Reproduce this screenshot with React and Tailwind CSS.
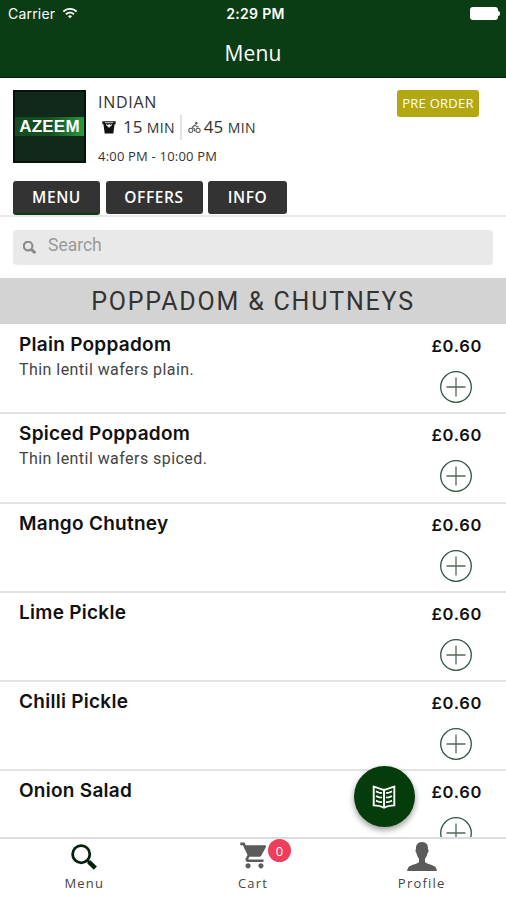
import { MdShoppingCart, MdWifi } from 'react-icons/md';

const tabs = [
  { label: 'MENU', className: 'w-[87px] h-[34px] border-b-2 border-[#0b3d14] pt-[2px]' },
  { label: 'OFFERS', className: 'w-[97px] h-[33px]' },
  { label: 'INFO', className: 'w-[79px] h-[33px]' },
];

const items = [
  { name: 'Plain Poppadom', description: 'Thin lentil wafers plain.', price: '£0.60' },
  { name: 'Spiced Poppadom', description: 'Thin lentil wafers spiced.', price: '£0.60' },
  { name: 'Mango Chutney', price: '£0.60' },
  { name: 'Lime Pickle', price: '£0.60' },
  { name: 'Chilli Pickle', price: '£0.60' },
  { name: 'Onion Salad', price: '£0.60' },
];

function SearchIcon({ className, strokeWidth = 2.8 }) {
  return (
    <svg viewBox="0 0 26 26" className={className} fill="none" stroke="currentColor" strokeWidth={strokeWidth}>
      <circle cx="10.2" cy="10.2" r="8.6" />
      <path d="M16 16l3 3" />
      <path d="M17.8 17.8l6.6 6.4" strokeWidth={strokeWidth + 1.6} />
    </svg>
  );
}

function BucketIcon() {
  return (
    <svg viewBox="0 0 14 14" className="h-[14px] w-[14px]">
      <path d="M.3 1.2H13.7V4.2H.3Z" fill="#222" />
      <path d="M1.3 3h11.4l-1.4 10.4H2.7Z" fill="#111" />
      <path d="M3 2.2h8v1H3Z" fill="#ccc" />
      <path d="M4 4.6l3 2.8 3-2.8-1.6.6L7 4.4l-1.4.8Z" fill="#fff" stroke="#fff" strokeWidth=".6" />
    </svg>
  );
}

function BikeIcon() {
  return (
    <svg viewBox="0 0 14 13" className="h-[13px] w-[13px]" fill="none" stroke="#555" strokeWidth="1.1">
      <circle cx="3" cy="9.5" r="2.3" />
      <circle cx="10.8" cy="9.5" r="2.3" />
      <path d="M7 10.5V8L4.6 6.3 7.5 3.8l1.8 2h2.2" />
      <circle cx="9" cy="1.9" r=".8" fill="#555" />
    </svg>
  );
}

function BookIcon() {
  return (
    <svg viewBox="0 0 24 24" className="h-6 w-6" fill="none" stroke="#fff" strokeWidth="1.9">
      <path d="M12 5Q8.5 4 1.7 1.7V20.4Q8 20.6 12 22.6Q16 20.6 22.3 20.4V1.7Q15.5 4 12 5ZM12 5V22.4" />
      <path
        d="M4 6.4l2 .9q2 .9 4 .4M4 11l2 .9q2 .9 4 .4M4 15.6l2 .9q2 .9 4 .4M20 6.4l-2 .9q-2 .9-4 .4M20 11l-2 .9q-2 .9-4 .4M20 15.6l-2 .9q-2 .9-4 .4"
        strokeWidth="1.7"
      />
    </svg>
  );
}

function ProfileIcon() {
  return (
    <svg viewBox="0 0 30 29" className="h-[29px] w-[30px]" fill="#5b5b5b">
      <path d="M15 0C10.7 0 8.7 3 9 7.2C8 7.6 8.5 10 9.5 11.2C10 14 11 15.5 12 16.5V20C10 22.2 3.5 23 1.6 25Q.4 26.5 .1 29H29.9Q29.6 26.5 28.4 25C26.5 23 20 22.2 18 20V16.5C19 15.5 20 14 20.5 11.2C21.5 10 22 7.6 21 7.2C21.3 3 19.3 0 15 0Z" />
    </svg>
  );
}

function AddButton() {
  return (
    <button className="block h-8 w-8">
      <svg viewBox="0 0 32 32" className="h-8 w-8" fill="none" stroke="#31523f" strokeWidth="1.3">
        <circle cx="16" cy="16" r="15.3" />
        <path d="M16 6.5v19M6.5 16h19" stroke="#53685b" />
      </svg>
    </button>
  );
}

function Header() {
  return (
    <header className="h-[78px] border-b border-[#05200a] bg-[#0b3d14] text-white">
      <div className="grid h-[26px] grid-cols-3 items-center pl-2 pr-[6px] font-['Inter',sans-serif] text-[14px]">
        <div className="flex items-center gap-[7px] tracking-[0.2px]">
          Carrier
          <MdWifi className="h-4 w-4" />
        </div>
        <div className="pl-[3px] text-center font-semibold tracking-[0.3px]">2:29 PM</div>
        <div className="flex items-center justify-end">
          <span className="h-[13px] w-[28px] rounded-[3px] bg-white" />
          <span className="h-[5px] w-[2px] rounded-r bg-white" />
        </div>
      </div>
      <h1 className="pt-[11px] text-center text-[21px] leading-8 tracking-[0.1px]">Menu</h1>
    </header>
  );
}

function RestaurantInfo() {
  return (
    <section className="flex h-[103px] items-start pl-[13px] pr-[27px] pt-3">
      <div className="flex h-[73px] w-[73px] items-center border-2 border-[#07120a] bg-[#10291a]">
        <div className="w-full bg-linear-to-r from-[#174d22] via-[#174d22] to-[#249b42] text-center font-['Liberation_Sans',sans-serif] text-[17px] font-bold leading-[19px] tracking-[0.2px] text-white">
          AZEEM
        </div>
      </div>
      <div className="ml-3 text-[#333]">
        <div className="text-[16px] leading-6 tracking-[0.7px]">INDIAN</div>
        <div className="flex h-[26px] items-center text-[17px]">
          <span className="ml-1 mr-[7px]"><BucketIcon /></span>
          <span>15 <span className="text-[14px] tracking-[0.3px]">MIN</span></span>
          <span className="mx-[5.5px] h-[25px] w-[2px] bg-[#e4e4e4]" />
          <BikeIcon />
          <span className="ml-[3px]">45 <span className="text-[14px] tracking-[0.4px]">MIN</span></span>
        </div>
        <div className="pt-[5px] text-[13px] leading-[22px] tracking-[0.2px]">4:00 PM - 10:00 PM</div>
      </div>
      <span className="ml-auto grid h-[27px] w-[82px] place-items-center rounded-[3px] bg-[#b4a812] text-[13px] tracking-[0.25px] text-white">
        PRE ORDER
      </span>
    </section>
  );
}

function MenuItem({ item }) {
  return (
    <li className="flex h-[89.25px] shrink-0 justify-between border-b-2 border-[#e3e3e3] pl-[19px] pr-6">
      <div>
        <h3 className="pt-2 font-['Inter',sans-serif] text-[19px] font-semibold leading-6 tracking-[0.27px] text-[#111]">{item.name}</h3>
        <p className="pt-[2px] font-['Roboto',sans-serif] text-[16px] leading-[22px] tracking-[0.45px] text-[#444]">{item.description}</p>
      </div>
      <div className="flex flex-col items-center">
        <span className="pt-[9px] font-['Inter',sans-serif] text-[16.5px] font-semibold leading-6 tracking-[0.7px] text-[#111]">{item.price}</span>
        <div className="mt-[13px] pr-[2px]"><AddButton /></div>
      </div>
    </li>
  );
}

export default function App() {
  return (
    <div className="relative flex h-[900px] w-[506px] flex-col overflow-hidden bg-white font-['Open_Sans',sans-serif]">
      <Header />
      <RestaurantInfo />

      <nav className="flex h-[36px] shrink-0 gap-[5.5px] border-b-2 border-[#e9e9e9] pl-[13px]">
        {tabs.map((tab) => (
          <button
            key={tab.label}
            className={`rounded-[3px] bg-[#333] text-[15.5px] font-semibold tracking-[0.6px] text-white ${tab.className}`}
          >
            {tab.label}
          </button>
        ))}
      </nav>

      <div className="h-[61px] shrink-0 px-[13px] pt-[13px]">
        <div className="flex h-[35px] items-center rounded bg-[#e9e9e9] pl-[10px] text-[#8b8b8b]">
          <SearchIcon className="h-[13px] w-[13px]" strokeWidth={4.2} />
          <span className="ml-3 pb-[5px] font-['Roboto',sans-serif] text-[17.5px] text-[#999]">Search</span>
        </div>
      </div>

      <h2 className="h-[46px] shrink-0 bg-[#d3d3d3] text-center font-['Roboto',sans-serif] text-[25px] leading-[47px] tracking-[1.8px] text-[#333]">
        POPPADOM &amp; CHUTNEYS
      </h2>

      <ul className="flex h-[513px] shrink-0 flex-col overflow-hidden pt-px">
        {items.map((item) => (
          <MenuItem key={item.name} item={item} />
        ))}
      </ul>

      <button className="absolute left-[354px] top-[766px] grid h-[61px] w-[61px] place-items-center rounded-full bg-[#053c0c] pr-px shadow-[0_3px_6px_rgba(0,0,0,0.4)]">
        <BookIcon />
      </button>

      <footer className="grid flex-1 grid-cols-3 border-t-2 border-[#dcdcdc] bg-white text-[13px] leading-[18px] tracking-[1.2px] text-[#444]">
        <a className="flex flex-col items-center">
          <span className="flex h-[35px] items-center"><SearchIcon className="h-[26px] w-[26px] text-[#06200e]" /></span>
          Menu
        </a>
        <a className="flex flex-col items-center">
          <span className="relative flex h-[35px] items-center pb-[3px] pl-[3px]">
            <MdShoppingCart className="h-[31px] w-[31px] text-[#5b5b5b]" />
            <span className="absolute left-[32px] top-0 grid h-[23px] w-[23px] place-items-center rounded-full bg-[#ee3e5c] text-[13px] tracking-normal text-white">0</span>
          </span>
          Cart
        </a>
        <a className="flex flex-col items-center">
          <span className="flex h-[35px] items-center"><ProfileIcon /></span>
          Profile
        </a>
      </footer>
    </div>
  );
}
